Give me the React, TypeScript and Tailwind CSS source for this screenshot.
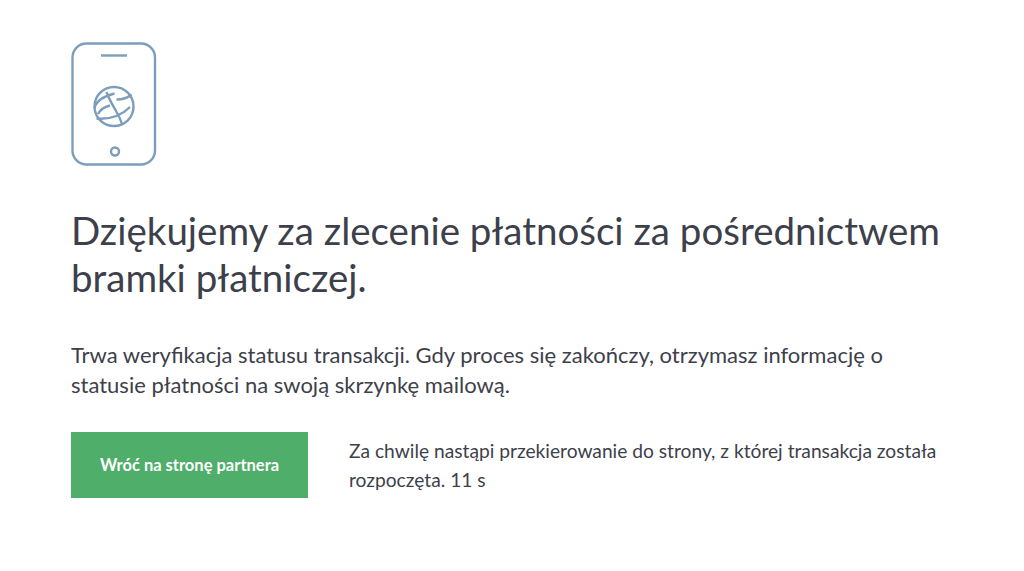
export default function App() {
  return (
    <div className="min-h-[571px] bg-white pt-[42px] pl-[71px] pr-[80px] font-['Lato',sans-serif] text-[#3d3f4a]">
      <svg width="86" height="124" viewBox="0 0 86 124" fill="none" stroke="#7c9dbb" strokeWidth="2.4" className="block">
        <rect x="1.5" y="1.500" width="82.500" height="121" rx="14" />
        <path d="M30 13.500h26" />
        <circle cx="44" cy="109.500" r="4" />
        <circle cx="43" cy="64.500" r="19.500" />
        <path d="M35.500 50c3 8 6 13 9 18s5 9 6.500 14M23.500 66c2-8 10-12 20-14.500M45.500 57.500c6 0 11-1.500 15-5M27 72c2-4 6-7 12-8.500M25.500 76.500c12 1 24-2 33.500-11.500" />
      </svg>
      <h1 className="mt-[41px] text-[38.500px] leading-[47px] font-normal">
        Dziękujemy za zlecenie płatności za pośrednictwem bramki płatniczej.
      </h1>
      <p className="mt-[39px] text-[22px] leading-[30px]">
        Trwa weryfikacja statusu transakcji. Gdy proces się zakończy, otrzymasz informację o statusie płatności na swoją skrzynkę mailową.
      </p>
      <div className="mt-[32px] flex items-center gap-[41px]">
        <button className="h-[66px] w-[237px] shrink-0 bg-[#4fae6a] text-[16.500px] font-bold text-white">
          Wróć na stronę partnera
        </button>
        <p className="text-[19.200px] leading-[29px]">
          Za chwilę nastąpi przekierowanie do strony, z której transakcja została rozpoczęta. 11 s
        </p>
      </div>
    </div>
  );
}
